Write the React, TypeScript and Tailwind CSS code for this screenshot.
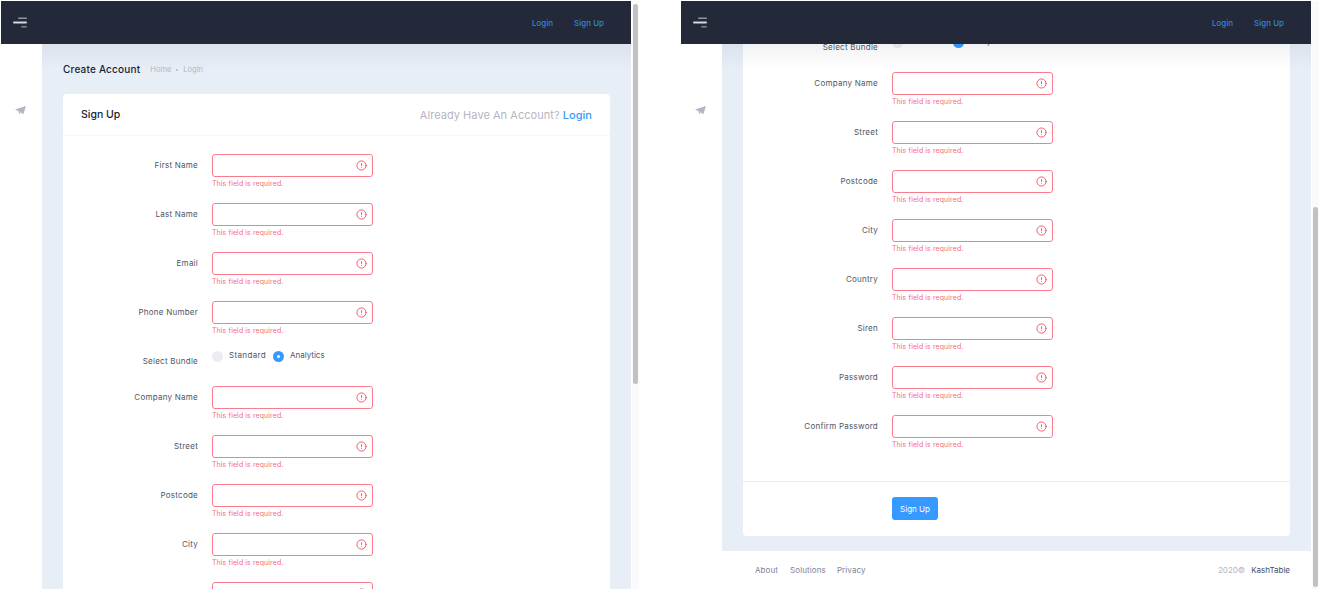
import React from "react";
import { CircleAlert } from "lucide-react";

const topFields = ["First Name", "Last Name", "Email", "Phone Number"];
const bottomFields = [
  "Company Name",
  "Street",
  "Postcode",
  "City",
  "Country",
  "Siren",
  "Password",
  "Confirm Password",
];

function Field({ label }: { label: string }) {
  return (
    <div className="flex h-[49px] items-start">
      <label className="mr-[14px] w-[135px] pt-[5px] text-right text-[8px] leading-[13px] tracking-[0.25px] text-[#4d5566]">
        {label}
      </label>
      <div className="w-[161px]">
        <div className="flex h-[23px] items-center justify-end rounded-[3px] border border-[#f97c8c] bg-white pr-[5px]">
          <CircleAlert size={11} strokeWidth={2} className="text-[#f64e60]" />
        </div>
        <div className="mt-[1px] text-[7px] leading-[11px] tracking-[0.09px] text-[#f76c7e]">
          This field is required.
        </div>
      </div>
    </div>
  );
}

function BundleRow() {
  return (
    <div className="flex h-[36px] items-start">
      <label className="mr-[14px] mt-[4px] w-[135px] pt-[1px] text-right text-[8px] leading-[13px] tracking-[0.25px] text-[#4d5566]">
        Select Bundle
      </label>
      <div className="flex items-start text-[8px] leading-[11px] text-[#4d5566]">
        <span className="mt-[1px] size-[11px] rounded-full bg-[#ebedf3]" />
        <span className="ml-[6px] mr-[7px] tracking-[0.35px]">Standard</span>
        <span className="mt-[1px] flex size-[11px] items-center justify-center rounded-full bg-[#3699ff]">
          <span className="size-[3px] rounded-full bg-white" />
        </span>
        <span className="ml-[6px]">Analytics</span>
      </div>
    </div>
  );
}

function Window({ scrolled }: { scrolled: boolean }) {
  return (
    <div className="flex h-full w-[630px] shrink-0 flex-col">
      <header className="flex h-[43px] shrink-0 items-center justify-between bg-[#232939] pl-[12px] pr-[27px]">
        <svg width="15" height="12" viewBox="0 0 15 12">
          <rect x="5" y="0.5" width="9" height="1.5" rx="0.7" fill="#8f93a0" />
          <rect x="0" y="4.5" width="14" height="2" rx="1" fill="#d5d7dc" />
          <rect x="8" y="9" width="6" height="1.5" rx="0.7" fill="#7d818f" />
        </svg>
        <nav className="flex gap-[21px] text-[8px] font-medium text-[#3084da]">
          <span>Login</span>
          <span>Sign Up</span>
        </nav>
      </header>
      <div className="flex min-h-0 flex-1">
        <aside className="w-[41px] shrink-0 bg-white pl-[14px] pt-[62px]">
          <svg width="11" height="9" viewBox="0 0 11 9">
            <path d="M0 3.6 11 0 8.4 8.2 5.6 6.2 4.2 8.6 3.6 5.2Z" fill="#b5b5c3" />
          </svg>
        </aside>
        <main className="relative min-w-0 flex-1 overflow-hidden bg-[#e8eef6]">
          <div className="absolute inset-x-0 top-0 z-10 h-[26px] bg-gradient-to-b from-[#1e2a4a]/[0.06] to-transparent" />
          <div className={scrolled ? "-mt-[314px]" : ""}>
            <div className="flex h-[50px] items-center px-[21px]">
              <h1 className="mr-[10px] text-[10px] font-medium tracking-[0.2px] text-[#181c32]">Create Account</h1>
              <span className="mt-[1px] text-[7.5px] text-[#b5b5c3]">Home</span>
              <span className="mx-[5px] mt-[1px] size-[2px] rounded-full bg-[#b5b5c3]" />
              <span className="mt-[1px] text-[7.5px] text-[#b5b5c3]">Login</span>
            </div>
            <section className="mx-[21px] rounded-[4px] bg-white">
              <div className="flex h-[42px] items-center justify-between border-b border-[#f5f6f9] px-[18px] pt-[1px]">
                <h2 className="text-[10.5px] font-medium text-[#181c32]">Sign Up</h2>
                <p className="text-[11px] tracking-[0.04px] text-[#b5b5c3]">
                  Already Have An Account? <span className="font-medium text-[#3699ff]">Login</span>
                </p>
              </div>
              <div className="pb-[17px] pt-[18px]">
                {topFields.map((f) => (
                  <Field key={f} label={f} />
                ))}
                <BundleRow />
                {bottomFields.map((f) => (
                  <Field key={f} label={f} />
                ))}
              </div>
              <div className="flex border-t border-[#ebedf3] pb-[16px] pl-[149px] pt-[15px]">
                <button className="h-[23px] w-[46px] rounded-[3px] bg-[#3699ff] text-[8px] text-white">
                  Sign Up
                </button>
              </div>
            </section>
            <footer className="mt-[15px] flex h-[38px] items-center justify-between bg-white pl-[33px] pr-[21px] text-[8px]">
              <div className="flex gap-[11px] tracking-[0.1px] text-[#7e8299]">
                <span>About</span>
                <span className="ml-[1px]">Solutions</span>
                <span>Privacy</span>
              </div>
              <div>
                <span className="mr-[6px] text-[#b5b5c3]">2020©</span>
                <span className="text-[#464e5f]">KashTable</span>
              </div>
            </footer>
          </div>
        </main>
      </div>
    </div>
  );
}

function Scrollbar({ scrolled }: { scrolled: boolean }) {
  return (
    <div className={`ml-[1px] flex h-full w-[7px] shrink-0 flex-col bg-[#fafafa] px-[1px] ${scrolled ? "justify-end pb-[2px]" : "pt-[3px]"}`}>
      <div className="h-[380px] rounded-[3px] bg-[#c1c1c1]" />
    </div>
  );
}

export default function App() {
  return (
    <div
      className="flex h-[589px] w-[1320px] overflow-hidden bg-white pl-[1px] pt-[1px]"
      style={{ fontFamily: "Inter, 'Open Sans', sans-serif" }}
    >
      <Window scrolled={false} />
      <Scrollbar scrolled={false} />
      <div className="w-[42px] shrink-0" />
      <Window scrolled />
      <Scrollbar scrolled />
    </div>
  );
}
